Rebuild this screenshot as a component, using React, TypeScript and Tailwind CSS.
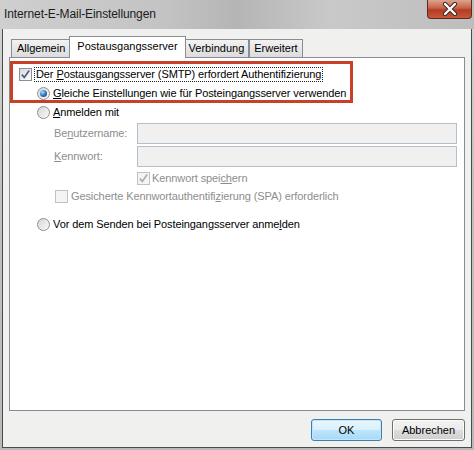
import React from 'react';

const ui = "font-['Liberation_Sans',Arial,sans-serif] text-[11px] leading-[13px]";

function Check({ checked, disabled }: { checked?: boolean; disabled?: boolean }) {
  return (
    <span
      className={`w-[13px] h-[13px] shrink-0 border flex items-center justify-center ${
        disabled ? 'border-[#c2c2c2] bg-[#f4f4f4]' : 'border-[#8e8f8f] bg-gradient-to-br from-[#d9d9d9] to-[#fdfdfd]'
      }`}
    >
      {checked && (
        <svg width="11" height="11" viewBox="0 0 11 11">
          <path
            d="M1.8 5.6 L4.3 8.4 L9.2 1.6"
            fill="none"
            stroke={disabled ? '#acacac' : '#4a5b94'}
            strokeWidth="1.7"
          />
        </svg>
      )}
    </span>
  );
}

function Radio({ checked }: { checked?: boolean }) {
  return (
    <span className="w-[13px] h-[13px] shrink-0 rounded-full border border-[#8e8f8f] bg-gradient-to-br from-[#d6d6d6] to-[#fbfbfb] flex items-center justify-center">
      {checked && (
        <span className="w-[7px] h-[7px] rounded-full bg-[radial-gradient(circle_at_35%_30%,#a9dcff,#2a6fc0_55%,#0f3d78)]" />
      )}
    </span>
  );
}

function Tab({ label, active, wide }: { label: string; active?: boolean; wide?: boolean }) {
  if (active) {
    return (
      <div className="h-[22px] -mb-px -mx-[2px] z-10 px-[7px] pt-[3px] bg-white border border-b-0 border-[#898c95] text-[#000]">
        {label}
      </div>
    );
  }
  return (
    <div
      className={`h-[18px] pt-[2px] bg-gradient-to-b from-[#f2f2f2] to-[#dcdcdc] border border-b-0 border-[#898c95] text-[#000] ${
        wide ? 'px-[5px]' : 'px-[4px]'
      }`}
    >
      {label}
    </div>
  );
}

export default function App() {
  return (
    <div className={`w-[474px] h-[450px] flex flex-col overflow-hidden bg-[linear-gradient(to_bottom,#d4d4d4,#c1c1c1_40%,#b9b9b9)] ${ui}`}>
      {/* title bar */}
      <div className="h-[29px] shrink-0 flex justify-between bg-[linear-gradient(to_right,#cfcfcf,#c3c3c3_35%,#b5b5b5_50%,#c9c9c9_70%,#bdbdbd)]">
        <div className="pl-[4px] pt-[8px] text-[12px] tracking-[-0.1px] text-[#1b1b1b]">Internet-E-Mail-Einstellungen</div>
        <div className="mr-[2px] w-[45px] h-[19px] rounded-b-[4px] border border-t-0 border-[#5b2a20] bg-[linear-gradient(to_bottom,#dda48f,#c86145_45%,#b13d22_55%,#c9573a)] flex items-center justify-center">
          <svg width="16" height="14" viewBox="0 0 16 14">
            <path d="M3 2 L13 12 M13 2 L3 12" stroke="#3a2320" strokeWidth="4.2" strokeLinecap="round" />
            <path d="M3 2 L13 12 M13 2 L3 12" stroke="#ffffff" strokeWidth="2.4" strokeLinecap="round" />
          </svg>
        </div>
      </div>

      {/* client */}
      <div className="flex-1 mx-[2px] mb-[2px] border-l border-r border-b border-[#4a4a4a] bg-[#f0f0ee] flex flex-col px-[6px]">
        <div className="mt-[7px] flex flex-col">
          {/* tabs */}
          <div className="flex items-end pl-[2px] h-[21px]">
            <Tab label="Allgemein" wide />
            <Tab label="Postausgangsserver" active />
            <Tab label="Verbindung" />
            <Tab label="Erweitert" />
          </div>

          {/* panel */}
          <div className="relative h-[354px] bg-white border border-[#898c95] flex flex-col pt-[7px] tracking-[-0.1px]">
            <div className="h-[19px] flex items-center pl-[9px] gap-[3px]">
              <Check checked />
              <span className="outline-1 outline-dotted outline-[#222] px-[1px]">
                Der <u>P</u>ostausgangsserver (SMTP) erfordert Authentifizierung
              </span>
            </div>
            <div className="h-[19px] flex items-center pl-[27px] gap-[3px]">
              <Radio checked />
              <span>
                <u>G</u>leiche Einstellungen wie für Posteingangsserver verwenden
              </span>
            </div>
            <div className="h-[19px] flex items-center pl-[27px] gap-[3px]">
              <Radio />
              <span>
                <u>A</u>nmelden mit
              </span>
            </div>

            <div className="mt-[1px] h-[21px] flex items-center pl-[44px] pr-[7px] text-[#8d8d8d]">
              <span className="w-[83px]">
                Be<u>n</u>utzername:
              </span>
              <div className="flex-1 h-[21px] border border-[#b4bfcc] bg-[#f0f0f0]" />
            </div>
            <div className="mt-[2px] h-[21px] flex items-center pl-[44px] pr-[7px] text-[#8d8d8d]">
              <span className="w-[83px]">
                <u>K</u>ennwort:
              </span>
              <div className="flex-1 h-[21px] border border-[#b4bfcc] bg-[#f0f0f0]" />
            </div>

            <div className="mt-[2px] h-[18px] flex items-center pl-[127px] gap-[2px] text-[#8d8d8d]">
              <Check checked disabled />
              <span>
                Kennwort spei<u>ch</u>ern
              </span>
            </div>
            <div className="h-[18px] flex items-center pl-[45px] gap-[3px] text-[#8d8d8d]">
              <Check disabled />
              <span>
                Gesicherte Kennwortauthentifi<u>z</u>ierung (SPA) erforderlich
              </span>
            </div>

            <div className="mt-[10px] h-[18px] flex items-center pl-[27px] gap-[3px]">
              <Radio />
              <span>
                Vor dem Senden bei Posteingangsserver anme<u>l</u>den
              </span>
            </div>

            {/* annotation */}
            <div className="absolute left-0 top-[3px] w-[343px] h-[42px] border-[3px] border-[#c8402a]" />
          </div>
        </div>

        {/* buttons */}
        <div className="mt-[8px] flex justify-end gap-[10px]">
          <button className="w-[71px] h-[22px] rounded-[3px] border border-[#3c7fb1] bg-[linear-gradient(to_bottom,#eaf6fd,#d9f0fc_50%,#bee6fd_50%,#a7d9f5)] shadow-[inset_0_0_0_1px_#c4e5f6] text-[#000]">
            OK
          </button>
          <button className="w-[73px] h-[22px] rounded-[3px] border border-[#707070] bg-[linear-gradient(to_bottom,#f2f2f2,#ebebeb_50%,#dddddd_50%,#cfcfcf)] shadow-[inset_0_0_0_1px_#fcfcfc] text-[#000]">
            Abbrechen
          </button>
        </div>
      </div>
    </div>
  );
}
